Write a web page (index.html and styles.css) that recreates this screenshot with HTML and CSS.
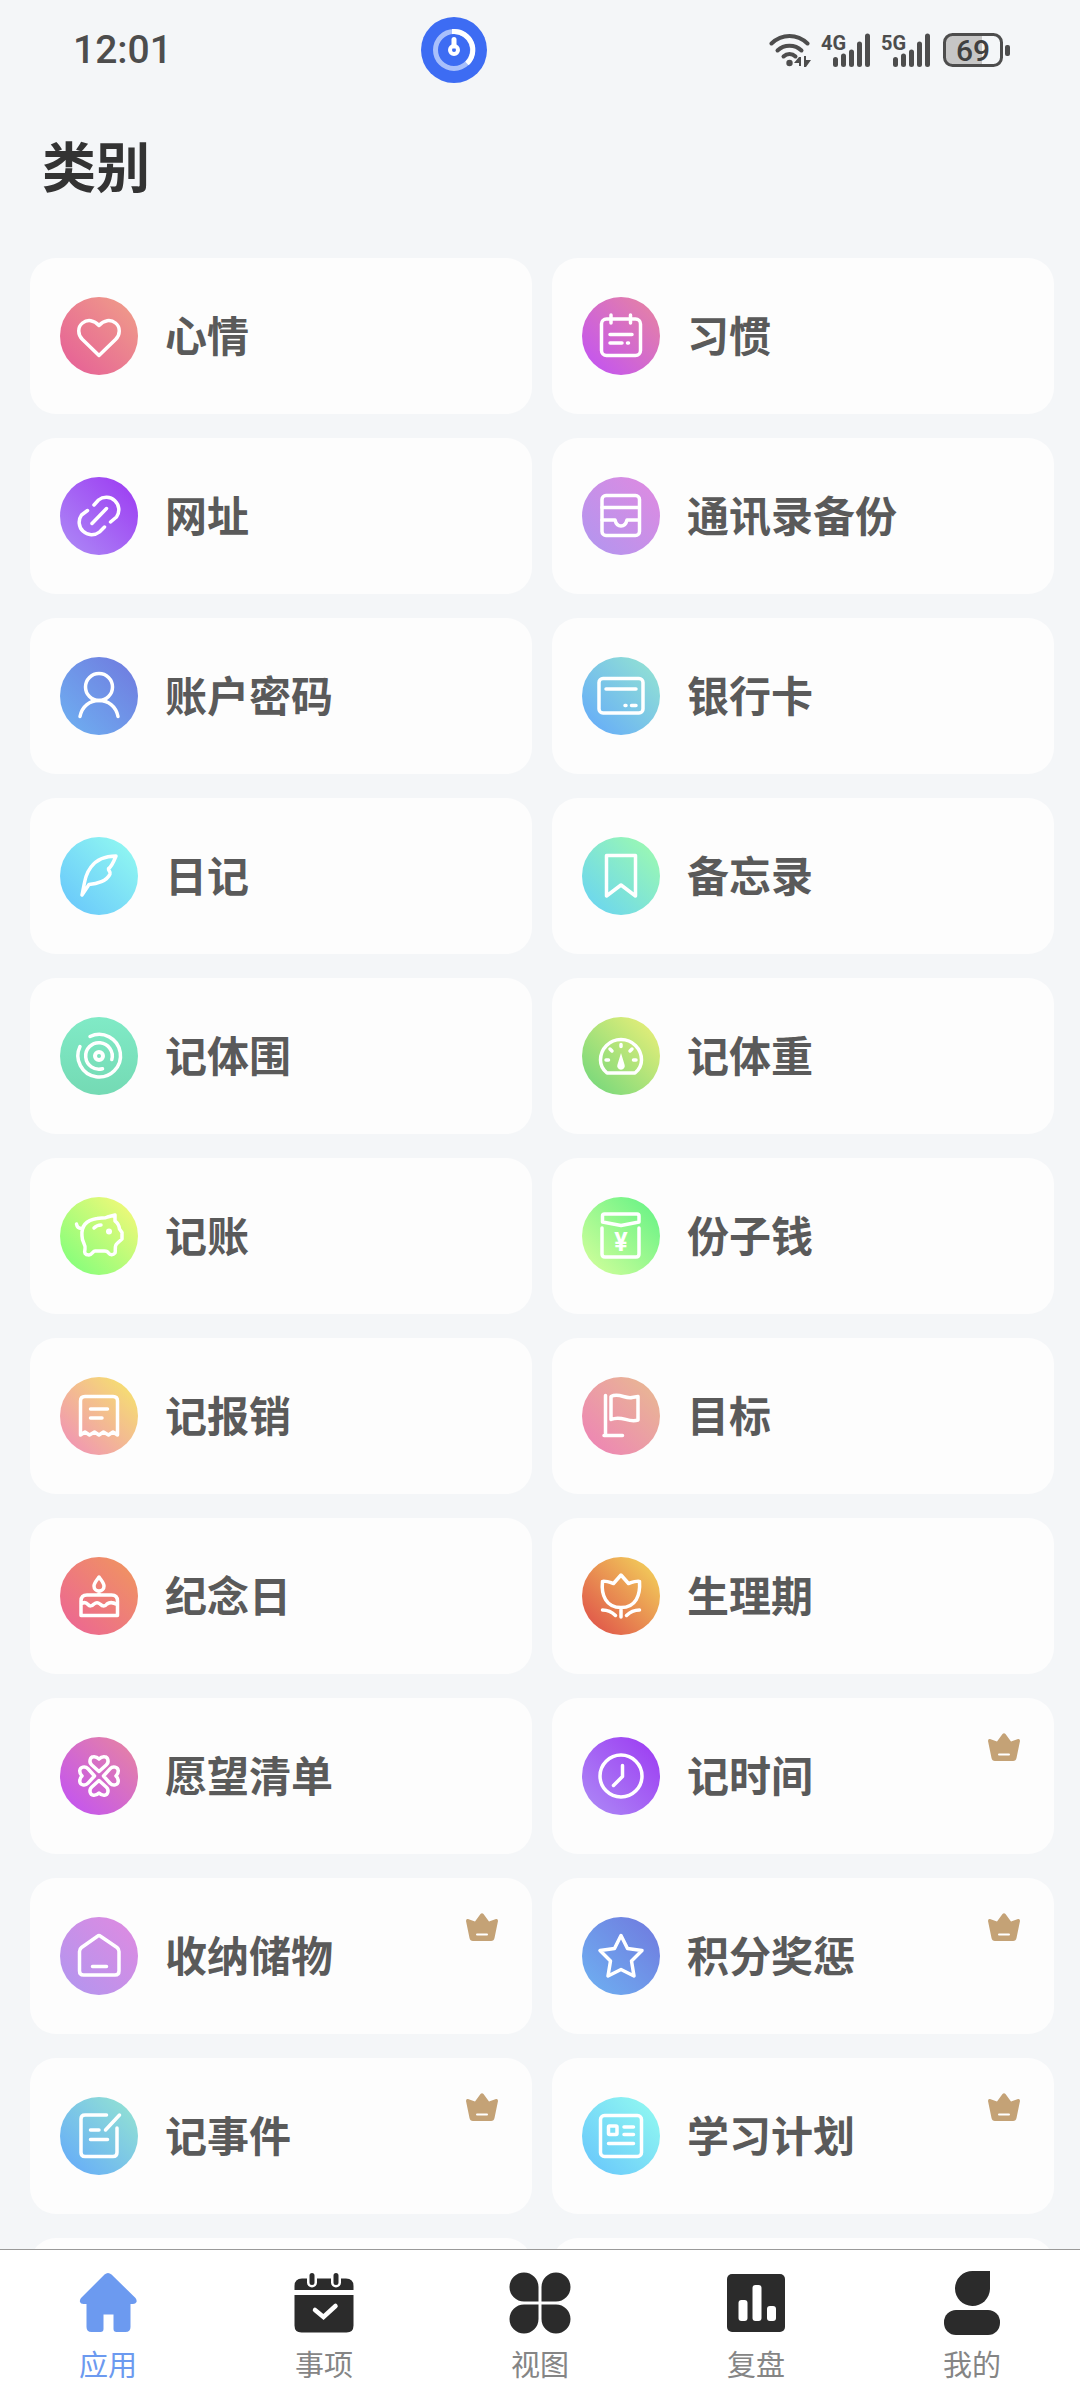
FILE: index.html
```
<!DOCTYPE html>
<html lang="zh-CN">
<head>
    <meta charset="UTF-8">
    <meta name="viewport" content="width=device-width, initial-scale=1.0">
    <title>类别</title>
    <link rel="stylesheet" href="styles.css">
</head>
<body>
    <div class="status-bar">
        <div class="status-time">12:01</div>
        <svg class="status-timer" viewBox="0 0 66 66" aria-hidden="true">
            <circle cx="33" cy="33" r="33" fill="#3d6cf3"/>
            <circle cx="33" cy="33" r="18.500" fill="none" stroke="#a9c0fb" stroke-width="5"/>
            <path d="M31 14.500H33A18.500 18.500 0 0 1 46 46.500" fill="none" stroke="#fff" stroke-width="5"/>
            <path d="M33 22.500V29" stroke="#fff" stroke-width="5" stroke-linecap="round"/>
            <circle cx="33" cy="33" r="4" fill="none" stroke="#fff" stroke-width="4"/>
        </svg>
        <div class="status-icons">
            <svg class="wifi" viewBox="0 0 42 40" aria-hidden="true">
                <g fill="none" stroke="#4d4d4d" stroke-width="4" stroke-linecap="round">
                    <path d="M2.500 13.500C13 3.500 28 3.500 38.500 13.500"/>
                    <path d="M8.500 20.500C15 14 26 14 32.500 20.500"/>
                    <path d="M14.500 26.500C18 23 23 23 26.500 26.500"/>
                </g>
                <circle cx="20.500" cy="33" r="3.200" fill="#4d4d4d"/>
                <path d="M25 33l5-6h2v9h-2v-3zM35 26h2v4h5l-5 7h-2z" fill="#4d4d4d"/>
            </svg>
            <svg class="signal" viewBox="0 0 50 40" aria-hidden="true">
                <text x="0" y="20">4G</text>
                <path d="M14.500 29.500V34.500M22.500 26V34.500M30.500 22V34.500M38.500 14V34.500M46.500 6V34.500"/>
            </svg>
            <svg class="signal" viewBox="0 0 50 40" aria-hidden="true">
                <text x="0" y="20">5G</text>
                <path d="M14.500 29.500V34.500M22.500 26V34.500M30.500 22V34.500M38.500 14V34.500M46.500 6V34.500"/>
            </svg>
            <svg class="battery" viewBox="0 0 67 40" aria-hidden="true">
                <path d="M39 5H10a8 8 0 0 0-8 8v14a8 8 0 0 0 8 8h29z" fill="#c6c6c6"/>
                <rect x="1.500" y="4.500" width="57" height="31" rx="8" fill="none" stroke="#4d4d4d" stroke-width="3"/>
                <rect x="62" y="15" width="5" height="11" rx="2" fill="#4d4d4d"/>
                <text x="30" y="31" text-anchor="middle">69</text>
            </svg>
        </div>
    </div>

    <main class="content">
        <h1 class="title">类别</h1>
        <div class="grid">
            <a class="card" href="#">
                <svg class="icon icon--rose" viewBox="0 0 78 78"><path d="M39 58.500L22.500 42.500C17.500 37.500 17.500 30 22.500 26C27.500 22 34 23 39 28.500C44 23 50.500 22 55.500 26C60.500 30 60.500 37.500 55.500 42.500Z"/></svg>
                <span class="label">心情</span>
            </a>
            <a class="card" href="#">
                <svg class="icon icon--magenta" viewBox="0 0 78 78"><rect x="19.500" y="22" width="39" height="36.500" rx="5"/><path d="M29 18V26M48.500 18V26M28 37.500H50M28 46H40M45.500 46H46.500"/></svg>
                <span class="label">习惯</span>
            </a>

            <a class="card" href="#">
                <svg class="icon icon--violet" viewBox="0 0 78 78"><path d="M34 28L38.500 23A12.500 12.500 0 0 1 56.500 40L50.500 45M44.500 50L39.500 55A12.500 12.500 0 0 1 21.500 38L27.500 33.500M32 46.500L46.500 31.500"/></svg>
                <span class="label">网址</span>
            </a>
            <a class="card" href="#">
                <svg class="icon icon--orchid" viewBox="0 0 78 78"><rect x="20" y="18.500" width="37.500" height="40" rx="4"/><path d="M20 30.500H57M20 43H33C34 47 36 49 39 49C42 49 44 47 45 43H57"/></svg>
                <span class="label">通讯录备份</span>
            </a>

            <a class="card" href="#">
                <svg class="icon icon--blue" viewBox="0 0 78 78"><circle cx="39" cy="30" r="13.500"/><path d="M20 59.500C22 49 30 43.500 39 43.500C48 43.500 56 49 58 59.500"/></svg>
                <span class="label">账户密码</span>
            </a>
            <a class="card" href="#">
                <svg class="icon icon--sky" viewBox="0 0 78 78"><rect x="17" y="21.500" width="44" height="34.500" rx="4"/><path d="M24 32H54M43 48.500H44M49.500 48.500H54"/></svg>
                <span class="label">银行卡</span>
            </a>

            <a class="card" href="#">
                <svg class="icon icon--cyan" viewBox="0 0 78 78"><path d="M22 58C25 44 25 38 31 30C37 22 45 19 56 19C54 24 51.500 30 48.500 31.500C48 34 51 34.500 50 37C47 44 37 47 29 47.500Z"/></svg>
                <span class="label">日记</span>
            </a>
            <a class="card" href="#">
                <svg class="icon icon--aqua" viewBox="0 0 78 78"><path d="M24.500 18.500H53.500V59L39 48L24.500 59Z"/></svg>
                <span class="label">备忘录</span>
            </a>

            <a class="card" href="#">
                <svg class="icon icon--mint" viewBox="0 0 78 78"><path d="M30 19.500A21.300 21.300 0 1 1 20 29.500M42.500 51.800A13.300 13.300 0 1 1 51.800 42.500"/><circle cx="39" cy="39" r="4" stroke-width="4"/></svg>
                <span class="label">记体围</span>
            </a>
            <a class="card" href="#">
                <svg class="icon icon--lime" viewBox="0 0 78 78"><path d="M25 56C20 52 18.500 47 18.500 43A20.500 20.500 0 0 1 59.500 43C59.500 47 58 52 53 56ZM39 27.500V29.500M24 43H26.500M51.500 43H54M28 32L30 34M50 32L48 34"/><path d="M39 36L42.500 47.500A3.800 3.800 0 1 1 35.500 47.500Z" fill="#fff" stroke="none"/></svg>
                <span class="label">记体重</span>
            </a>

            <a class="card" href="#">
                <svg class="icon icon--green" viewBox="0 0 78 78"><path d="M16.500 27C17 30 18.500 31.500 21.500 31.500M22 39C21 28 27 23 37 21.500C42 20.500 44 22 47.500 20L55 18V24C58 26 59 28 59.500 32L62 35.500V42L57 46.500C54 49 56 53 55 56C53 58.500 50 58 48.500 56C47 53 45 54 42 54H35C33 54 32 58 29 58C25 58 24 56 25 52C26 47 22 46 22 39ZM34 31C36 29 38 28 41 28"/><circle cx="49" cy="34.500" r="3" fill="#fff" stroke="none"/></svg>
                <span class="label">记账</span>
            </a>
            <a class="card" href="#">
                <svg class="icon icon--leaf" viewBox="0 0 78 78"><path d="M22.500 17H55Q57 17 57 19V25L39 28.500L20.500 25V19Q20.500 17 22.500 17ZM20 31V57Q20 60 23 60H54Q57 60 57 57V31"/><text x="39" y="54" text-anchor="middle">¥</text></svg>
                <span class="label">份子钱</span>
            </a>

            <a class="card" href="#">
                <svg class="icon icon--peach" viewBox="0 0 78 78"><path d="M20.500 58V24Q20.500 19.500 25 19.500H53Q57.500 19.500 57.500 24V58L53 55L48.500 58L43.500 55L39 58L34.500 55L29.500 58L25 55ZM30.500 32H47.500M30.500 41H42"/></svg>
                <span class="label">记报销</span>
            </a>
            <a class="card" href="#">
                <svg class="icon icon--pink" viewBox="0 0 78 78"><path d="M23.500 18.500V58.500M22 58.500H40.500M29 19.500C37 15.500 43 22 50 20.500L56 19.500V43C46 46.500 40 37.500 29 42.500Z"/></svg>
                <span class="label">目标</span>
            </a>

            <a class="card" href="#">
                <svg class="icon icon--coral" viewBox="0 0 78 78"><path d="M39 20C41 23 44 26 44 29C44 32 42 34 39 34C36 34 34 32 34 29C34 26 37 23 39 20ZM39 34V38M21 58.500V44Q21 38 27 38H51.500Q57.500 38 57.500 44V58.500ZM21 47Q25 44 28 47.500Q30.500 50.500 34 47Q37 44.500 40 47Q44 51 47 47Q51 44 57 47.500"/></svg>
                <span class="label">纪念日</span>
            </a>
            <a class="card" href="#">
                <svg class="icon icon--amber" viewBox="0 0 78 78"><path d="M20.500 24.500Q22 23.500 31.500 26.500L39 18L46.500 26.500Q56 23.500 57.500 24.500C58.500 38 54 50.500 39 50.500C24 50.500 19 38 20.500 24.500ZM39 50.500V60M20.500 53Q28 53 33.500 58.500M57.500 53Q50 53 44.500 58.500"/></svg>
                <span class="label">生理期</span>
            </a>

            <a class="card" href="#">
                <svg class="icon icon--magenta" viewBox="0 0 78 78">
                    <path id="leaf" d="M39 34.500L31.800 28C28.500 25 30 20 33.500 19.800C36.500 19.500 38 21 39 22C40 21 41.500 19.500 44.500 19.800C48 20 49.500 25 46.200 28Z"/>
                    <use href="#leaf" transform="rotate(90 39 39)"/>
                    <use href="#leaf" transform="rotate(180 39 39)"/>
                    <use href="#leaf" transform="rotate(270 39 39)"/>
                </svg>
                <span class="label">愿望清单</span>
            </a>
            <a class="card" href="#">
                <svg class="icon icon--violet" viewBox="0 0 78 78"><circle cx="39" cy="39" r="21"/><path d="M40.500 28.500V39.500L31.500 48.500"/></svg>
                <span class="label">记时间</span>
                <svg class="crown" viewBox="0 0 32 28"><path d="M14.500 1Q16 -.5 17.500 1L23 8.500L30 6Q32 5.500 32 8L28.500 25Q28 28 25 28H7Q4 28 3.500 25L0 8Q0 5.500 2 6L9 8.500Z"/><path class="crown-bar" d="M11 21.500H21"/></svg>
            </a>

            <a class="card" href="#">
                <svg class="icon icon--orchid" viewBox="0 0 78 78"><path d="M37.500 19.200Q39 18 40.500 19.200L57 30.500Q59 32 59 34.500V54Q59 58 55 58H23.500Q19.500 58 19.500 54V34.500Q19.500 32 21.500 30.500ZM32.500 49.500H46.500"/></svg>
                <span class="label">收纳储物</span>
                <svg class="crown" viewBox="0 0 32 28"><path d="M14.500 1Q16 -.5 17.500 1L23 8.500L30 6Q32 5.500 32 8L28.500 25Q28 28 25 28H7Q4 28 3.500 25L0 8Q0 5.500 2 6L9 8.500Z"/><path class="crown-bar" d="M11 21.500H21"/></svg>
            </a>
            <a class="card" href="#">
                <svg class="icon icon--blue" viewBox="0 0 78 78"><path d="M39 18.500L45.500 31.500L60 33.500L49.500 44L52 59L39 52.500L26 59L28.500 44L18 33.500L32.500 31.500Z"/></svg>
                <span class="label">积分奖惩</span>
                <svg class="crown" viewBox="0 0 32 28"><path d="M14.500 1Q16 -.5 17.500 1L23 8.500L30 6Q32 5.500 32 8L28.500 25Q28 28 25 28H7Q4 28 3.500 25L0 8Q0 5.500 2 6L9 8.500Z"/><path class="crown-bar" d="M11 21.500H21"/></svg>
            </a>

            <a class="card" href="#">
                <svg class="icon icon--sky" viewBox="0 0 78 78"><path d="M46.500 18H25Q21 18 21 22V55.500Q21 59.500 25 59.500H53Q57 59.500 57 55.500V31M59.500 18L45.500 33M30.500 33H39M30.500 42.500H47.500"/></svg>
                <span class="label">记事件</span>
                <svg class="crown" viewBox="0 0 32 28"><path d="M14.500 1Q16 -.5 17.500 1L23 8.500L30 6Q32 5.500 32 8L28.500 25Q28 28 25 28H7Q4 28 3.500 25L0 8Q0 5.500 2 6L9 8.500Z"/><path class="crown-bar" d="M11 21.500H21"/></svg>
            </a>
            <a class="card" href="#">
                <svg class="icon icon--cyan" viewBox="0 0 78 78"><rect x="18.500" y="18.500" width="41" height="41" rx="4"/><rect x="26.500" y="29" width="8.500" height="8.500" rx="1"/><path d="M42 30H51.500M42 37.500H51.500M26.500 46.500H51.500"/></svg>
                <span class="label">学习计划</span>
                <svg class="crown" viewBox="0 0 32 28"><path d="M14.500 1Q16 -.5 17.500 1L23 8.500L30 6Q32 5.500 32 8L28.500 25Q28 28 25 28H7Q4 28 3.500 25L0 8Q0 5.500 2 6L9 8.500Z"/><path class="crown-bar" d="M11 21.500H21"/></svg>
            </a>

            <div class="card"></div>
            <div class="card"></div>
        </div>
    </main>

    <nav class="tabs">
        <a class="tab tab--active" href="#">
            <svg class="tab-icon" viewBox="0 0 64 64"><path d="M28.500 3.500Q32 .5 35.500 3.500L59.500 27Q61 29 60.500 31Q59.500 33 57 33H54.500V56Q54.500 61 49.500 61H40.500Q37.500 61 37.500 58V43.500H27.500V58Q27.500 61 24.500 61H15.500Q10.500 61 10.500 56V33H7.500Q4.500 33 4 31Q3.500 29 5 27Z"/></svg>
            <span>应用</span>
        </a>
        <a class="tab" href="#">
            <svg class="tab-icon" viewBox="0 0 64 64"><path d="M2.500 19V15Q2.500 7.500 10 7.500H54Q61.500 7.500 61.500 15V19ZM2.500 24H61.500V54.500Q61.500 61.500 54.500 61.500H9.500Q2.500 61.500 2.500 54.500Z"/><path d="M20 5V11.500M44 5V11.500" fill="none" stroke="#fff" stroke-width="10" stroke-linecap="round"/><path d="M20 4.500V11.500M44 4.500V11.500" fill="none" stroke="#2b2b2b" stroke-width="5" stroke-linecap="round"/><path d="M23 39L31.500 46L43.500 35" fill="none" stroke="#fff" stroke-width="4.500" stroke-linecap="round"/></svg>
            <span>事项</span>
        </a>
        <a class="tab" href="#">
            <svg class="tab-icon" viewBox="0 0 64 64"><path d="M30.500 30.500H16A14.500 14.500 0 1 1 30.500 16ZM33.500 30.500V16A14.500 14.500 0 1 1 48 30.500ZM30.500 33.500V48A14.500 14.500 0 1 1 16 33.500ZM33.500 33.500H48A14.500 14.500 0 1 1 33.500 48Z"/></svg>
            <span>视图</span>
        </a>
        <a class="tab" href="#">
            <svg class="tab-icon" viewBox="0 0 64 64"><rect x="3" y="3" width="58" height="58" rx="5"/><g fill="#fff"><rect x="14.500" y="29" width="9" height="21" rx="3"/><rect x="28.500" y="14" width="9" height="36" rx="3"/><rect x="43" y="35" width="9" height="15" rx="3"/></g></svg>
            <span>复盘</span>
        </a>
        <a class="tab" href="#">
            <svg class="tab-icon" viewBox="0 0 64 64"><path d="M50 0V18A17.500 17.500 0 1 1 32.500 0Z"/><rect x="4" y="39" width="56" height="25" rx="12"/></svg>
            <span>我的</span>
        </a>
    </nav>
</body>
</html>
```

FILE: styles.css
```
/* Reset */
* {
    margin: 0;
    padding: 0;
    box-sizing: border-box;
}
body {
    font-family: "Noto Sans CJK SC", sans-serif;
    display: flex;
    flex-direction: column;
    height: 100vh;
    background-color: #f4f6f8;
    color: #5a5a5a;
}
a {
    color: inherit;
    text-decoration: none;
}

/* Status bar */
.status-bar {
    display: flex;
    align-items: center;
    flex-shrink: 0;
    height: 100px;
    padding: 0 70px 0 73px;
}
.status-time {
    width: 348px;
    font-family: Roboto, sans-serif;
    font-size: 39px;
    line-height: 48px;
    font-weight: 500;
    color: #4d4d4d;
}
.status-timer {
    width: 66px;
    height: 66px;
}
.status-icons {
    display: flex;
    gap: 10px;
    margin-left: auto;
}
.status-icons svg {
    height: 40px;
}
.wifi {
    width: 42px;
}
.signal {
    width: 50px;
}
.signal path {
    stroke: #4d4d4d;
    stroke-width: 5;
    stroke-linecap: round;
}
.signal text {
    font-family: Roboto, sans-serif;
    font-size: 20px;
    font-weight: 700;
    fill: #4d4d4d;
}
.battery {
    width: 67px;
    margin-left: 2px;
}
.battery text {
    font-family: Roboto, sans-serif;
    font-size: 30px;
    font-weight: 500;
    fill: #404040;
}

/* Category list */
.content {
    flex: 1;
    min-height: 0;
    overflow-y: auto;
    scrollbar-width: none;
    padding: 26px 26px 24px 30px;
}
.title {
    padding-left: 12px;
    margin-bottom: 54px;
    font-size: 54px;
    line-height: 78px;
    font-weight: 700;
    color: #333333;
}
.grid {
    display: grid;
    grid-template-columns: repeat(2, 1fr);
    gap: 24px 20px;
}
.card {
    position: relative;
    display: flex;
    align-items: center;
    gap: 27px;
    height: 156px;
    padding: 0 30px;
    border-radius: 26px;
    background-color: #fdfdfd;
}
.label {
    padding-bottom: 4px;
    font-size: 42px;
    line-height: 60px;
    font-weight: 700;
}
.crown {
    position: absolute;
    top: 35px;
    right: 34px;
    width: 32px;
    height: 28px;
    fill: #c4a276;
}
.crown-bar {
    stroke: #ffffff;
    stroke-width: 2;
    stroke-linecap: round;
}

/* Round icons */
.icon {
    width: 78px;
    height: 78px;
    border-radius: 50%;
    fill: none;
    stroke: #ffffff;
    stroke-width: 3.5;
    stroke-linecap: round;
    stroke-linejoin: round;
}
.icon text {
    font-family: Roboto, sans-serif;
    font-size: 25px;
    font-weight: 700;
    fill: #ffffff;
    stroke: none;
}
.icon--rose { background: linear-gradient(45deg, #e55c98, #f0a088); }
.icon--magenta { background: linear-gradient(45deg, #c050f8, #e8869e); }
.icon--violet { background: linear-gradient(45deg, #ad8cf6, #9c38f2); }
.icon--orchid { background: linear-gradient(45deg, #b096f0, #e08ae0); }
.icon--blue { background: linear-gradient(45deg, #6eb2f2, #7078de); }
.icon--sky { background: linear-gradient(45deg, #62a8fc, #96e6d0); }
.icon--cyan { background: linear-gradient(45deg, #66c4fc, #94fcf0); }
.icon--aqua { background: linear-gradient(45deg, #66d2f6, #a0fcac); }
.icon--mint { background: linear-gradient(0deg, #74dab4, #80eac6); }
.icon--lime { background: linear-gradient(45deg, #6cd67c, #f0f078); }
.icon--green { background: linear-gradient(45deg, #78ff7c, #fcf878); }
.icon--leaf { background: linear-gradient(45deg, #d8ff9c, #60f284); }
.icon--peach { background: linear-gradient(45deg, #f08cbc, #f6e868); }
.icon--pink { background: linear-gradient(45deg, #ee80b8, #e8bc90); }
.icon--coral { background: linear-gradient(45deg, #ec6298, #f0985c); }
.icon--amber { background: linear-gradient(45deg, #de4848, #f4da5c); }

/* Bottom tabs */
.tabs {
    display: flex;
    flex-shrink: 0;
    border-top: 1px solid #999999;
    background-color: #ffffff;
}
.tab {
    flex: 1;
    display: flex;
    flex-direction: column;
    align-items: center;
    gap: 7px;
    padding: 21px 0 16px;
    font-size: 29px;
    line-height: 42px;
    color: #858585;
}
.tab-icon {
    width: 64px;
    height: 64px;
    fill: #2b2b2b;
}
.tab--active {
    color: #6c9af0;
}
.tab--active .tab-icon {
    fill: #6c9af0;
}
```
